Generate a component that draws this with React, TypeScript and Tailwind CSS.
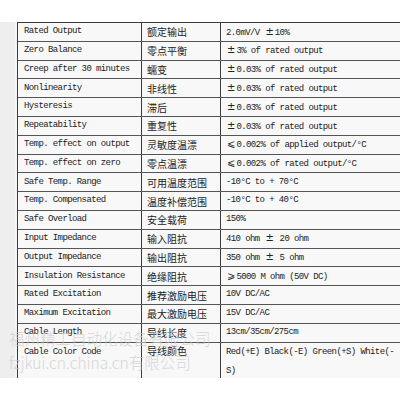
import React from "react";

type Row = [string, string, string];

const rows: Row[] = [
  ["Rated Output", "额定输出", "2.0mV/V ±10%"],
  ["Zero Balance", "零点平衡", "±3% of rated output"],
  ["Creep after 30 minutes", "蠕变", "±0.03% of rated output"],
  ["Nonlinearity", "非线性", "±0.03% of rated output"],
  ["Hysteresis", "滞后", "±0.03% of rated output"],
  ["Repeatability", "重复性", "±0.03% of rated output"],
  ["Temp. effect on output", "灵敏度温漂", "⩽0.002% of applied output/°C"],
  ["Temp. effect on zero", "零点温漂", "⩽0.002% of rated output/°C"],
  ["Safe Temp. Range", "可用温度范围", "-10°C to + 70°C"],
  ["Temp. Compensated", "温度补偿范围", "-10°C to + 40°C"],
  ["Safe Overload", "安全载荷", "150%"],
  ["Input Impedance", "输入阻抗", "410 ohm ± 20 ohm"],
  ["Output Impedance", "输出阻抗", "350 ohm ± 5 ohm"],
  ["Insulation Resistance", "绝缘阻抗", "⩾5000 M ohm (50V DC)"],
  ["Rated Excitation", "推荐激励电压", "10V DC/AC"],
  ["Maximum Excitation", "最大激励电压", "15V DC/AC"],
  ["Cable Length", "导线长度", "13cm/35cm/275cm"],
];

// wide symbols come out of another font like in the original
const Value = ({ text }: { text: string }) => (
  <span className="whitespace-pre">
    {text.split(/([±⩽⩾])/).map((part, i) =>
      part === "±" || part === "⩽" || part === "⩾" ? (
        <span key={i} className="font-['DejaVu_Sans',sans-serif] text-[10px] tracking-normal px-[1px]">
          {part}
        </span>
      ) : (
        part
      )
    )}
  </span>
);

export default function App() {
  return (
    <div className="w-[400px] h-[400px] bg-white overflow-hidden">
      <div className="h-[22px]" />
      <div className="relative flex h-[356px] overflow-hidden">
        <div className="w-[15px] bg-[#eeeeee]" />
        <div className="w-[2px] bg-[#f4f4f4]" />
        <div className="flex-1 border-l border-t border-[#3c3c3c] bg-[#f8f8f8] text-[#222]">
          {rows.map(([en, zh, val]) => (
            <div key={en} className="flex h-[18.8px] border-b border-[#555]">
              <div className="w-[124px] shrink-0 border-r border-[#3c3c3c] pl-[6px] flex items-center font-['Liberation_Mono',monospace] text-[9px] tracking-[-0.6px] whitespace-nowrap">
                {en}
              </div>
              <div className="w-[79px] shrink-0 border-r border-[#3c3c3c] pl-[5px] flex items-center font-['Noto_Sans_CJK_SC',sans-serif] text-[10px] whitespace-nowrap">
                {zh}
              </div>
              <div className="flex-1 pl-[5px] flex items-center font-['Liberation_Mono',monospace] text-[9px] tracking-[-0.6px] whitespace-nowrap">
                <Value text={val} />
              </div>
            </div>
          ))}
          <div className="flex h-[36px]">
            <div className="w-[124px] shrink-0 border-r border-[#3c3c3c] pl-[6px] pt-[3px] font-['Liberation_Mono',monospace] text-[9px] tracking-[-0.6px] leading-[12px]">
              Cable Color Code
            </div>
            <div className="w-[79px] shrink-0 border-r border-[#3c3c3c] pl-[5px] pt-[1px] font-['Noto_Sans_CJK_SC',sans-serif] text-[10px] leading-[14px]">
              导线颜色
            </div>
            <div className="flex-1 pl-[5px]">
              <div className="w-[170px] break-all font-['Liberation_Mono',monospace] text-[9px] tracking-[-0.6px] leading-[19px]">
                Red(+E) Black(-E) Green(+S) White(-S)
              </div>
            </div>
          </div>
        </div>

        {/* watermark */}
        <div className="absolute left-[9px] top-[304px] text-[#cccccc] opacity-75 font-['Noto_Sans_CJK_SC',sans-serif] text-[15.5px] leading-[24px] font-light whitespace-nowrap pointer-events-none">
          <div>福州精工自动化设备有限公司</div>
          <div>fzjkui.cn.china.cn有限公司</div>
          <div>fzjxfzx2014.cn.china.cn</div>
        </div>
      </div>
    </div>
  );
}
